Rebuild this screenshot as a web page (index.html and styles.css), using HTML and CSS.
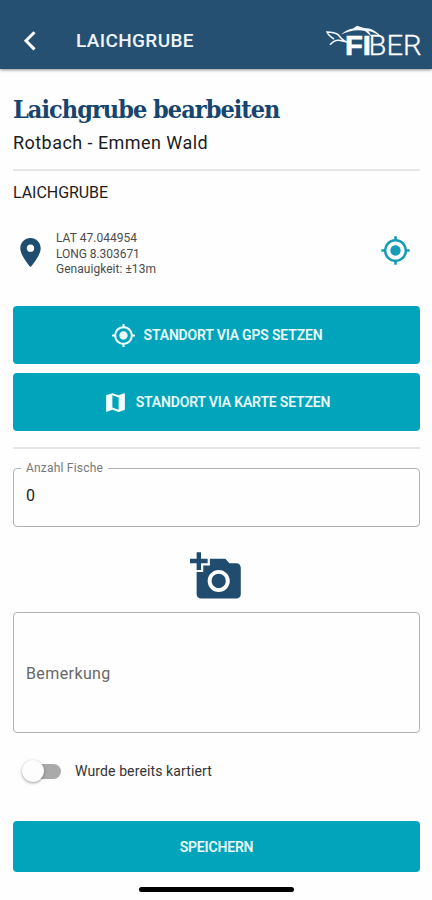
FILE: index.html
```html
<!DOCTYPE html>
<html lang="de">
<head>
<meta charset="utf-8">
<meta name="viewport" content="width=device-width, initial-scale=1">
<title>Laichgrube bearbeiten</title>
<link rel="stylesheet" href="styles.css">
</head>
<body>
<header class="bar">
  <svg class="back" viewBox="0 0 14 22"><path d="M11.500 2.200 3 10.800l8.500 8.600"/></svg>
  <span class="bar-title">LAICHGRUBE</span>
  <svg class="logo" viewBox="0 0 98 36">
    <path class="tail" d="M21 16C17 15 15 12.500 12 8.500 9 6.800 5 6.200 1 6c1 2.500 3 4.500 7 7M4 18.800c3-3.500 6-4.800 9-4.500l8 1.700"/>
    <path class="fish" d="M15 8.500c4-3.500 7-5 12-6l4-2.800 7 2.300c7 0 13 3 19 10.500-6-4.500-9-6.500-14.500-7.500l3.500 6-7-6c-8-2-16-.2-24 3.500"/>
    <text class="logo-bold" x="19" y="29.400" textLength="26" lengthAdjust="spacingAndGlyphs">FI</text>
    <text class="logo-light" x="42.500" y="29.400" textLength="53" lengthAdjust="spacingAndGlyphs">BER</text>
  </svg>
</header>
<main>
  <h1>Laichgrube bearbeiten</h1>
  <p class="place">Rotbach - Emmen Wald</p>
  <hr>
  <h2>LAICHGRUBE</h2>
  <section class="location">
    <svg class="pin" viewBox="0 0 24 24"><path d="M12 2C8.130 2 5 5.130 5 9c0 5.250 7 13 7 13s7-7.750 7-13c0-3.870-3.130-7-7-7zm0 9.500a2.500 2.500 0 1 1 0-5 2.500 2.500 0 0 1 0 5z"/></svg>
    <div class="coords"><div class="lat">LAT 47.044954</div><div class="long">LONG 8.303671</div><div class="acc">Genauigkeit: ±13m</div></div>
    <svg class="target" viewBox="0 0 24 24"><path d="M12 8c-2.210 0-4 1.790-4 4s1.790 4 4 4 4-1.790 4-4-1.790-4-4-4zm8.940 3A8.994 8.994 0 0 0 13 3.060V1h-2v2.060A8.994 8.994 0 0 0 3.060 11H1v2h2.060A8.994 8.994 0 0 0 11 20.940V23h2v-2.060A8.994 8.994 0 0 0 20.940 13H23v-2h-2.060zM12 19c-3.870 0-7-3.130-7-7s3.130-7 7-7 7 3.130 7 7-3.130 7-7 7z"/></svg>
  </section>
  <button class="btn gps"><svg viewBox="0 0 24 24"><path d="M12 8c-2.210 0-4 1.790-4 4s1.790 4 4 4 4-1.790 4-4-1.790-4-4-4zm8.940 3A8.994 8.994 0 0 0 13 3.060V1h-2v2.060A8.994 8.994 0 0 0 3.060 11H1v2h2.060A8.994 8.994 0 0 0 11 20.940V23h2v-2.060A8.994 8.994 0 0 0 20.940 13H23v-2h-2.060zM12 19c-3.870 0-7-3.130-7-7s3.130-7 7-7 7 3.130 7 7-3.130 7-7 7z"/></svg><span>STANDORT VIA GPS SETZEN</span></button>
  <button class="btn map"><svg viewBox="0 0 24 24"><path d="m20.500 3-.16.030L15 5.100 9 3 3.360 4.900c-.21.070-.36.250-.36.480V20.500c0 .28.220.5.500.5l.16-.03L9 18.900l6 2.100 5.640-1.900c.21-.07.360-.25.360-.48V3.500c0-.28-.22-.5-.5-.5zM15 19l-6-2.110V5l6 2.110V19z"/></svg><span>STANDORT VIA KARTE SETZEN</span></button>
  <hr class="second">
  <fieldset class="count"><legend>Anzahl Fische</legend><span>0</span></fieldset>
  <svg class="camera" viewBox="0 0 24 24"><path d="M3 4V1h2v3h3v2H5v3H3V6H0V4h3zm3 6V7h3V4h7l1.830 2H21c1.100 0 2 .9 2 2v12c0 1.100-.9 2-2 2H5c-1.100 0-2-.9-2-2V10h3zm7 9c2.760 0 5-2.240 5-5s-2.240-5-5-5-5 2.240-5 5 2.240 5 5 5zm-3.200-5c0 1.770 1.430 3.200 3.200 3.200s3.200-1.430 3.200-3.200-1.430-3.200-3.200-3.200-3.200 1.430-3.200 3.200z"/></svg>
  <div class="note">Bemerkung</div>
  <label class="toggle"><span class="track"><span class="thumb"></span></span><span class="toggle-text">Wurde bereits kartiert</span></label>
  <button class="btn save"><span>SPEICHERN</span></button>
</main>
<div class="home"></div>
</body>
</html>
```
FILE: styles.css
```css
* { box-sizing: border-box; }
body {
  margin: 0;
  height: 900px;
  overflow: hidden;
  background: #fefefe;
  color: #1c1c1c;
  font-family: Roboto, "Liberation Sans", sans-serif;
}
.bar {
  display: flex;
  align-items: flex-start;
  height: 69px;
  background: #265072;
  color: #eef5fc;
  box-shadow: 0 1px 3px rgba(0, 0, 0, .45);
}
.back { width: 14px; height: 22px; margin: 30px 0 0 23px; fill: none; stroke: #fff; stroke-width: 3; }
.bar-title { margin: 29px 0 0 39px; font-size: 19px; line-height: 24px; font-weight: 500; letter-spacing: .35px; white-space: nowrap; }
.logo { width: 98px; height: 36px; margin: 26px 8px 0 auto; fill: #fff; overflow: visible; }
.fish { fill: #f2f7fb; }
.tail { fill: none; stroke: #f2f7fb; stroke-width: 1.6; }
.logo text { font-family: "Liberation Sans", sans-serif; font-size: 27px; }
.logo .logo-bold { font-weight: 700; stroke: #fff; stroke-width: .6; }
.logo .logo-light { font-family: Roboto, sans-serif; font-weight: 300; stroke: #fff; stroke-width: .3; }

main { display: flex; flex-direction: column; padding: 0 12px 0 13px; }
h1 {
  margin: 25px 0 0;
  font: 700 25px/32px "Roboto Slab", "DejaVu Serif Condensed", "DejaVu Serif", serif;
  letter-spacing: -.97px;
  color: #164570;
  white-space: nowrap;
}
.place { margin: 5px 0 0; font-size: 18px; line-height: 24px; letter-spacing: .45px; }
hr { width: 100%; height: 2px; margin: 14px 0 0; border: 0; background: #e6e6e6; }
h2 { margin: 12px 0 0; font-size: 16px; line-height: 20px; font-weight: 400; letter-spacing: -.05px; }
.location { display: flex; height: 59px; margin-top: 26px; }
.pin { width: 35px; height: 35px; margin-top: 6px; fill: #204c70; }
.coords { margin: 2px 0 0 8px; font-size: 12px; line-height: 15.500px; letter-spacing: .03px; color: #4c4c4c; }
.coords .long { letter-spacing: -.05px; }
.target { width: 31px; height: 31px; margin: 6px 9px 0 auto; fill: #169db5; }
.btn {
  display: flex;
  align-items: center;
  justify-content: center;
  height: 58px;
  padding: 0;
  border: 0;
  border-radius: 4px;
  background: #02a4bb;
  color: #eafcff;
  font: 600 14px/20px Roboto, "Liberation Sans", sans-serif;
  letter-spacing: -.17px;
}
.btn svg { width: 25px; height: 25px; margin-right: 8px; fill: #f2fdff; }
.gps { margin-top: 18px; }
.map { margin-top: 9px; }
.second { margin-top: 16px; }
.count { height: 66px; margin: 12px 0 0; padding: 0 0 0 7px; border: 1px solid #b1b1b1; border-radius: 4px; }
.count legend { padding: 0 5px; font-size: 12px; line-height: 14px; letter-spacing: .2px; color: #777; }
.count span { display: block; margin: 11px 0 0 5px; font-size: 16px; line-height: 20px; }
.camera { width: 53px; height: 53px; margin: 23px 0 0 177px; fill: #204c70; }
.note { height: 121px; margin-top: 9px; padding-left: 12px; border: 1px solid #b1b1b1; border-radius: 4px; font-size: 16px; line-height: 121px; letter-spacing: .4px; color: #686868; }
.toggle { display: flex; align-items: center; height: 24px; margin-top: 26px; }
.track { display: flex; align-items: center; width: 35px; height: 15px; margin-left: 13px; border-radius: 8px; background: #aaa; }
.thumb { width: 22px; height: 22px; flex: none; margin-left: -4px; border-radius: 50%; background: #fdfdfd; box-shadow: 0 1px 3px rgba(0, 0, 0, .4); }
.toggle-text { margin-left: 14px; font-size: 14px; letter-spacing: .12px; color: #333; }
.save { height: 51px; margin-top: 38px; }
.home { width: 155px; height: 5px; margin: 15px auto 0 139px; border-radius: 3px; background: #000; }
```
